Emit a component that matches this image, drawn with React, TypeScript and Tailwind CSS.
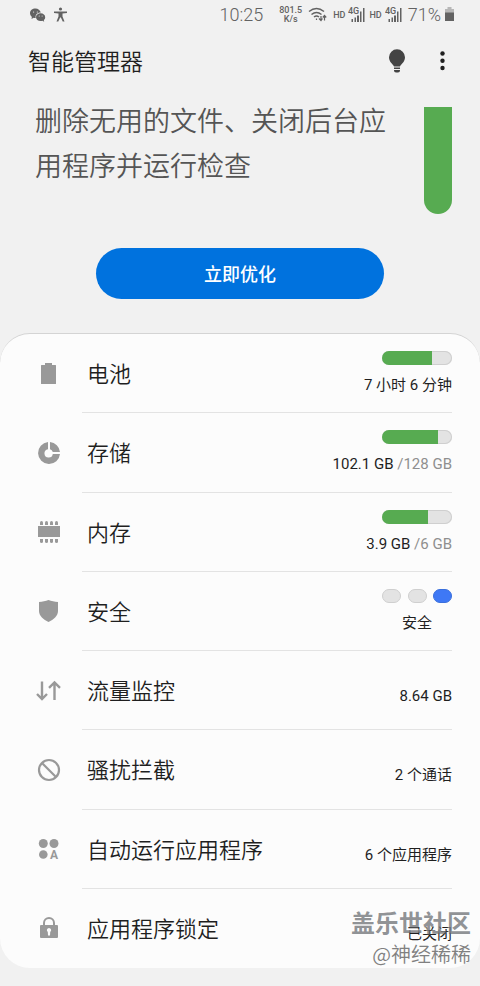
import type { ReactNode } from 'react';
import clsx from 'clsx';

/** One row of the device care list. */
interface CareItem {
  id: string;
  label: string;
  icon: ReactNode;
  /** Main value, drawn dark. */
  value: string;
  /** Total capacity, drawn grey after the value. */
  total?: string;
  /** Fill of the meter in percent. */
  percent?: number;
  /** Active step (0-2) of the security indicator. */
  level?: number;
}

function BatteryIcon() {
  return (
    <svg viewBox="0 0 24 24" className="size-6 fill-current" aria-hidden="true">
      <path d="M8 1h7v2h3.500q.5 0 .5.500v18q0 .5-.5.500h-14q-.5 0-.5-.500v-18q0-.5.500-.5H8z" />
    </svg>
  );
}

function StorageIcon() {
  return (
    <svg viewBox="0 0 24 24" className="size-6 fill-current" aria-hidden="true">
      <path d="M11 1v7.200A4.200 4.200 0 1 0 15.800 13H23A11 11 0 1 1 11 1z" />
      <path d="M13 1.100A11 11 0 0 1 23 11h-7.200A4.200 4.200 0 0 0 13 8.200z" />
    </svg>
  );
}

function MemoryIcon() {
  return (
    <svg viewBox="0 0 24 24" className="size-6 fill-current" aria-hidden="true">
      <rect x="1" y="6" width="22" height="11" />
      {[3, 8, 13, 18].map((x) => (
        <g key={x}>
          <path d={`M${x} 5V2.500a1.500 1.500 0 0 1 3 0V5z`} />
          <path d={`M${x} 19v2.500a1.500 1.500 0 0 0 3 0V19z`} />
        </g>
      ))}
    </svg>
  );
}

function ShieldIcon() {
  return (
    <svg viewBox="0 0 24 24" className="size-6 fill-current" aria-hidden="true">
      <path d="M11.500 1c3 1.200 6 1.800 9.500 2v9c0 5-4.500 8.500-9.500 11C6.500 20.500 2 17 2 12V3c3.500-.2 6.500-.8 9.500-2z" />
    </svg>
  );
}

function DataIcon() {
  return (
    <svg
      viewBox="0 0 24 24"
      className="size-6 overflow-visible fill-none stroke-current"
      strokeWidth="2.4"
      aria-hidden="true"
    >
      <path d="M5 2.500V20M0 15l5 5 5-5M17.500 21V3.500M12 8.800l5.500-5.300L23 8.800" />
    </svg>
  );
}

function BlockIcon() {
  return (
    <svg
      viewBox="0 0 24 24"
      className="size-6 fill-none stroke-current"
      strokeWidth="2.2"
      aria-hidden="true"
    >
      <circle cx="12" cy="12" r="10" />
      <path d="M5 5l14 14" />
    </svg>
  );
}

function AutoRunIcon() {
  return (
    <svg viewBox="0 0 24 24" className="size-6 fill-current" aria-hidden="true">
      <circle cx="6.3" cy="6.500" r="4.500" />
      <circle cx="17" cy="6.500" r="4.500" />
      <circle cx="6.3" cy="17.500" r="4.300" />
      <text x="17" y="21.500" textAnchor="middle" className="font-['Roboto'] text-[12px] font-bold">
        A
      </text>
    </svg>
  );
}

function LockIcon() {
  return (
    <svg viewBox="0 0 24 24" className="size-6" aria-hidden="true">
      <path d="M7 10V7a5 5 0 0 1 10 0v3" className="fill-none stroke-current" strokeWidth="2" />
      <path
        fillRule="evenodd"
        className="fill-current"
        d="M4 9h16q1 0 1 1v11q0 1-1 1H4q-1 0-1-1V10q0-1 1-1zm8 3a2.200 2.200 0 0 0-1.200 4l.2 3.500h2l.2-3.500A2.200 2.200 0 0 0 12 12z"
      />
    </svg>
  );
}

const ITEMS: CareItem[] = [
  { id: 'battery', label: '电池', icon: <BatteryIcon />, value: '7 小时 6 分钟', percent: 71 },
  { id: 'storage', label: '存储', icon: <StorageIcon />, value: '102.1 GB', total: '/128 GB', percent: 80 },
  { id: 'memory', label: '内存', icon: <MemoryIcon />, value: '3.9 GB', total: '/6 GB', percent: 65 },
  { id: 'security', label: '安全', icon: <ShieldIcon />, value: '安全', level: 2 },
  { id: 'data', label: '流量监控', icon: <DataIcon />, value: '8.64 GB' },
  { id: 'block', label: '骚扰拦截', icon: <BlockIcon />, value: '2 个通话' },
  { id: 'autorun', label: '自动运行应用程序', icon: <AutoRunIcon />, value: '6 个应用程序' },
  { id: 'lock', label: '应用程序锁定', icon: <LockIcon />, value: '已关闭' },
];

/** "HD" mark with the 4G signal bars of one SIM. */
function SimSignal() {
  return (
    <span className="flex items-center gap-[3px]">
      <span className="text-[9px] leading-3 font-medium">HD</span>
      <svg viewBox="0 0 17 15" className="h-[15px] w-[17px] fill-current" aria-hidden="true">
        <text x="0" y="7" className="text-[9px] font-medium">
          4G
        </text>
        <path d="M3.500 12h1.500v3H3.500zM6.500 10.500H8v4.500H6.500zM9 8.500h2v6.500H9z" />
        <path d="M12 4.500h1.500V15H12zM15 1h1.500v14H15z" />
      </svg>
    </span>
  );
}

function StatusBar() {
  return (
    <div className="flex h-7 items-center justify-between pt-px pr-[25px] pl-[29px] text-[#626262]">
      <div className="flex items-center gap-2">
        <svg viewBox="0 0 17 14" className="h-[14px] w-[17px] fill-current" aria-hidden="true">
          <path d="M6.500 .5C3.300.5 1 2.500 1 5.200c0 1.500.8 2.800 1.900 3.600L2.500 11l2.200-1.200q1 .3 2 .2C6 6.800 8.300 4.400 11.800 4.500 11.200 2.200 9.100.5 6.500.5z" />
          <path d="M11.600 5.300c-2.600 0-4.600 1.700-4.600 3.900s2 3.900 4.600 3.900q1 0 1.800-.3l1.800 1-.4-1.700c.9-.7 1.400-1.700 1.400-2.900 0-2.200-2-3.900-4.600-3.900z" />
          <g className="fill-[#f1f1f1]">
            <circle cx="4.600" cy="4" r=".6" />
            <circle cx="8.300" cy="4" r=".6" />
            <circle cx="10.200" cy="8" r=".5" />
            <circle cx="13.100" cy="8" r=".5" />
          </g>
        </svg>
        <svg viewBox="0 0 13 15" className="h-[15px] w-[13px] fill-current" aria-hidden="true">
          <circle cx="6.500" cy="2" r="1.600" />
          <path d="M0 4.500h13V6L8.500 6.500v3l2 5H8.700L6.900 10.500h-.8L4.300 14.500H2.500l2-5v-3L0 6z" />
        </svg>
      </div>
      <div className="flex items-center">
        <time className="mr-4 text-lg leading-7 font-light">10:25</time>
        <span className="mr-1.5 text-center text-[9px] leading-[9px] font-medium">
          801.5
          <br />
          K/s
        </span>
        <svg
          viewBox="0 0 19 15"
          className="mr-1.5 h-[15px] w-[19px] fill-none stroke-current"
          strokeWidth="1.500"
          aria-hidden="true"
        >
          <path d="M1 4.500Q8.500-1.500 16 4.500M3.500 7.500q5-4 10 0M6 10q2.500-2 5 0" />
          <path
            d="M8.500 11.500v1.500M13 9v4.500M11 11.500l2 2 1.500-2M16.500 13.500V8.500M14.800 10.500l1.700-2 1.700 2"
            strokeWidth="1.200"
          />
        </svg>
        <span className="mr-1 flex">
          <SimSignal />
        </span>
        <SimSignal />
        <span className="mr-1 ml-1.5 text-lg leading-7 font-light">71%</span>
        <svg viewBox="0 0 10 15" className="h-[15px] w-[10px] fill-current" aria-hidden="true">
          <path d="M2.500 0h4v2H9v4H0V2h2.500z" className="opacity-40" />
          <path d="M0 5.500h9V14H0z" />
        </svg>
      </div>
    </div>
  );
}

function Meter({ label, percent }: { label: string; percent: number }) {
  return (
    <div
      role="meter"
      aria-label={label}
      aria-valuenow={percent}
      aria-valuemin={0}
      aria-valuemax={100}
      className="h-3.5 w-[70px] overflow-hidden rounded-full bg-[#e3e3e3] shadow-[inset_0_0_0_1px_#cfcfcf]"
    >
      <div className="h-full bg-[#57ab51]" style={{ width: `${percent}%` }} />
    </div>
  );
}

function SecurityLevel({ level }: { level: number }) {
  return (
    <div className="flex w-[70px] justify-between">
      {[0, 1, 2].map((step) => (
        <span
          key={step}
          className={clsx(
            'h-3.5 w-[19px] rounded-full border',
            step === level ? 'border-[#3a6fdc] bg-[#3e78f5]' : 'border-[#cfcfcf] bg-[#e3e3e3]',
          )}
        />
      ))}
    </div>
  );
}

function CareRow({ item, divided }: { item: CareItem; divided: boolean }) {
  const hasGauge = item.percent !== undefined || item.level !== undefined;
  return (
    <li className="flex">
      <button type="button" className="flex w-full items-stretch pr-7 pl-[37px] text-left">
        <span className="flex w-[45px] items-center text-[#999999]">{item.icon}</span>
        <span
          className={clsx(
            'flex flex-1 items-center justify-between pl-[5px]',
            divided && 'border-b border-[#e3e3e3]',
          )}
        >
          <span className="pt-1 text-[22px] leading-8 font-[350] text-[#1f1f1f]">{item.label}</span>
          <span
            className={clsx(
              'flex flex-col gap-2.5',
              item.level !== undefined ? 'items-center' : 'items-end',
              !hasGauge && 'pt-3',
            )}
          >
            {item.percent !== undefined && <Meter label={item.label} percent={item.percent} />}
            {item.level !== undefined && <SecurityLevel level={item.level} />}
            <span className="text-[15px] leading-5 text-[#1f1f1f]">
              {item.value}
              {item.total && <span className="text-[#8f8f8f]"> {item.total}</span>}
            </span>
          </span>
        </span>
      </button>
    </li>
  );
}

export default function App() {
  return (
    <div className="relative min-h-screen bg-[#f1f1f1] pb-[18px] font-['Roboto','Noto_Sans_CJK_SC',sans-serif]">
      <StatusBar />

      <header className="flex h-[66px] items-center justify-between pr-7 pl-7">
        <h1 className="pt-1 text-[23px] leading-8 font-[350] text-[#1f1f1f]">智能管理器</h1>
        <div className="flex items-center gap-6">
          <button type="button" aria-label="提示" className="text-[#444444]">
            <svg viewBox="0 0 24 24" className="size-6 fill-current">
              <path d="M10 17.500C9.500 15.500 5 13.500 5 8.300a8 8 0 0 1 16 0c0 5.200-4.500 7.200-5 9.200z" />
              <path d="M10 18.500h6v1.500h-6zM10 21h6v.5q0 2-2 2h-2q-2 0-2-2z" />
            </svg>
          </button>
          <button type="button" aria-label="更多选项" className="text-[#1f1f1f]">
            <svg viewBox="0 0 20 24" className="h-6 w-5 fill-current">
              <circle cx="10.500" cy="4.500" r="2.200" />
              <circle cx="10.500" cy="11.700" r="2.200" />
              <circle cx="10.500" cy="19" r="2.200" />
            </svg>
          </button>
        </div>
      </header>

      <section className="pr-7 pl-[35px]">
        <div className="flex items-start justify-between gap-7">
          <p className="flex-1 pt-1.5 text-[27px] leading-[45px] font-[350] text-[#555555]">
            删除无用的文件、关闭后台应用程序并运行检查
          </p>
          <div className="mt-[13px] h-[107px] w-7 rounded-b-full bg-[#57ab51]" />
        </div>
      </section>

      <div className="mt-[34px] flex justify-center">
        <button
          type="button"
          className="h-[51px] w-3/5 rounded-full bg-[#0072de] pt-0.5 text-lg font-medium text-white"
        >
          立即优化
        </button>
      </div>

      <ul className="mt-[34px] grid min-h-[635px] auto-rows-fr rounded-[30px] border-t border-[#d4d4d4] bg-[#fcfcfc]">
        {ITEMS.map((item, index) => (
          <CareRow key={item.id} item={item} divided={index < ITEMS.length - 1} />
        ))}
      </ul>

      {/* Community stamp over the lower right corner */}
      <div className="pointer-events-none absolute right-[9px] bottom-4 text-right font-['Noto_Sans_CJK_SC',sans-serif]">
        <p className="text-2xl leading-8 font-bold text-[#606468]/70 [text-shadow:-1px_-1px_1px_#ffffff80]">
          盖乐世社区
        </p>
        <p className="text-xl leading-8 font-[350] text-[#808080]">@神经稀稀</p>
      </div>
    </div>
  );
}
